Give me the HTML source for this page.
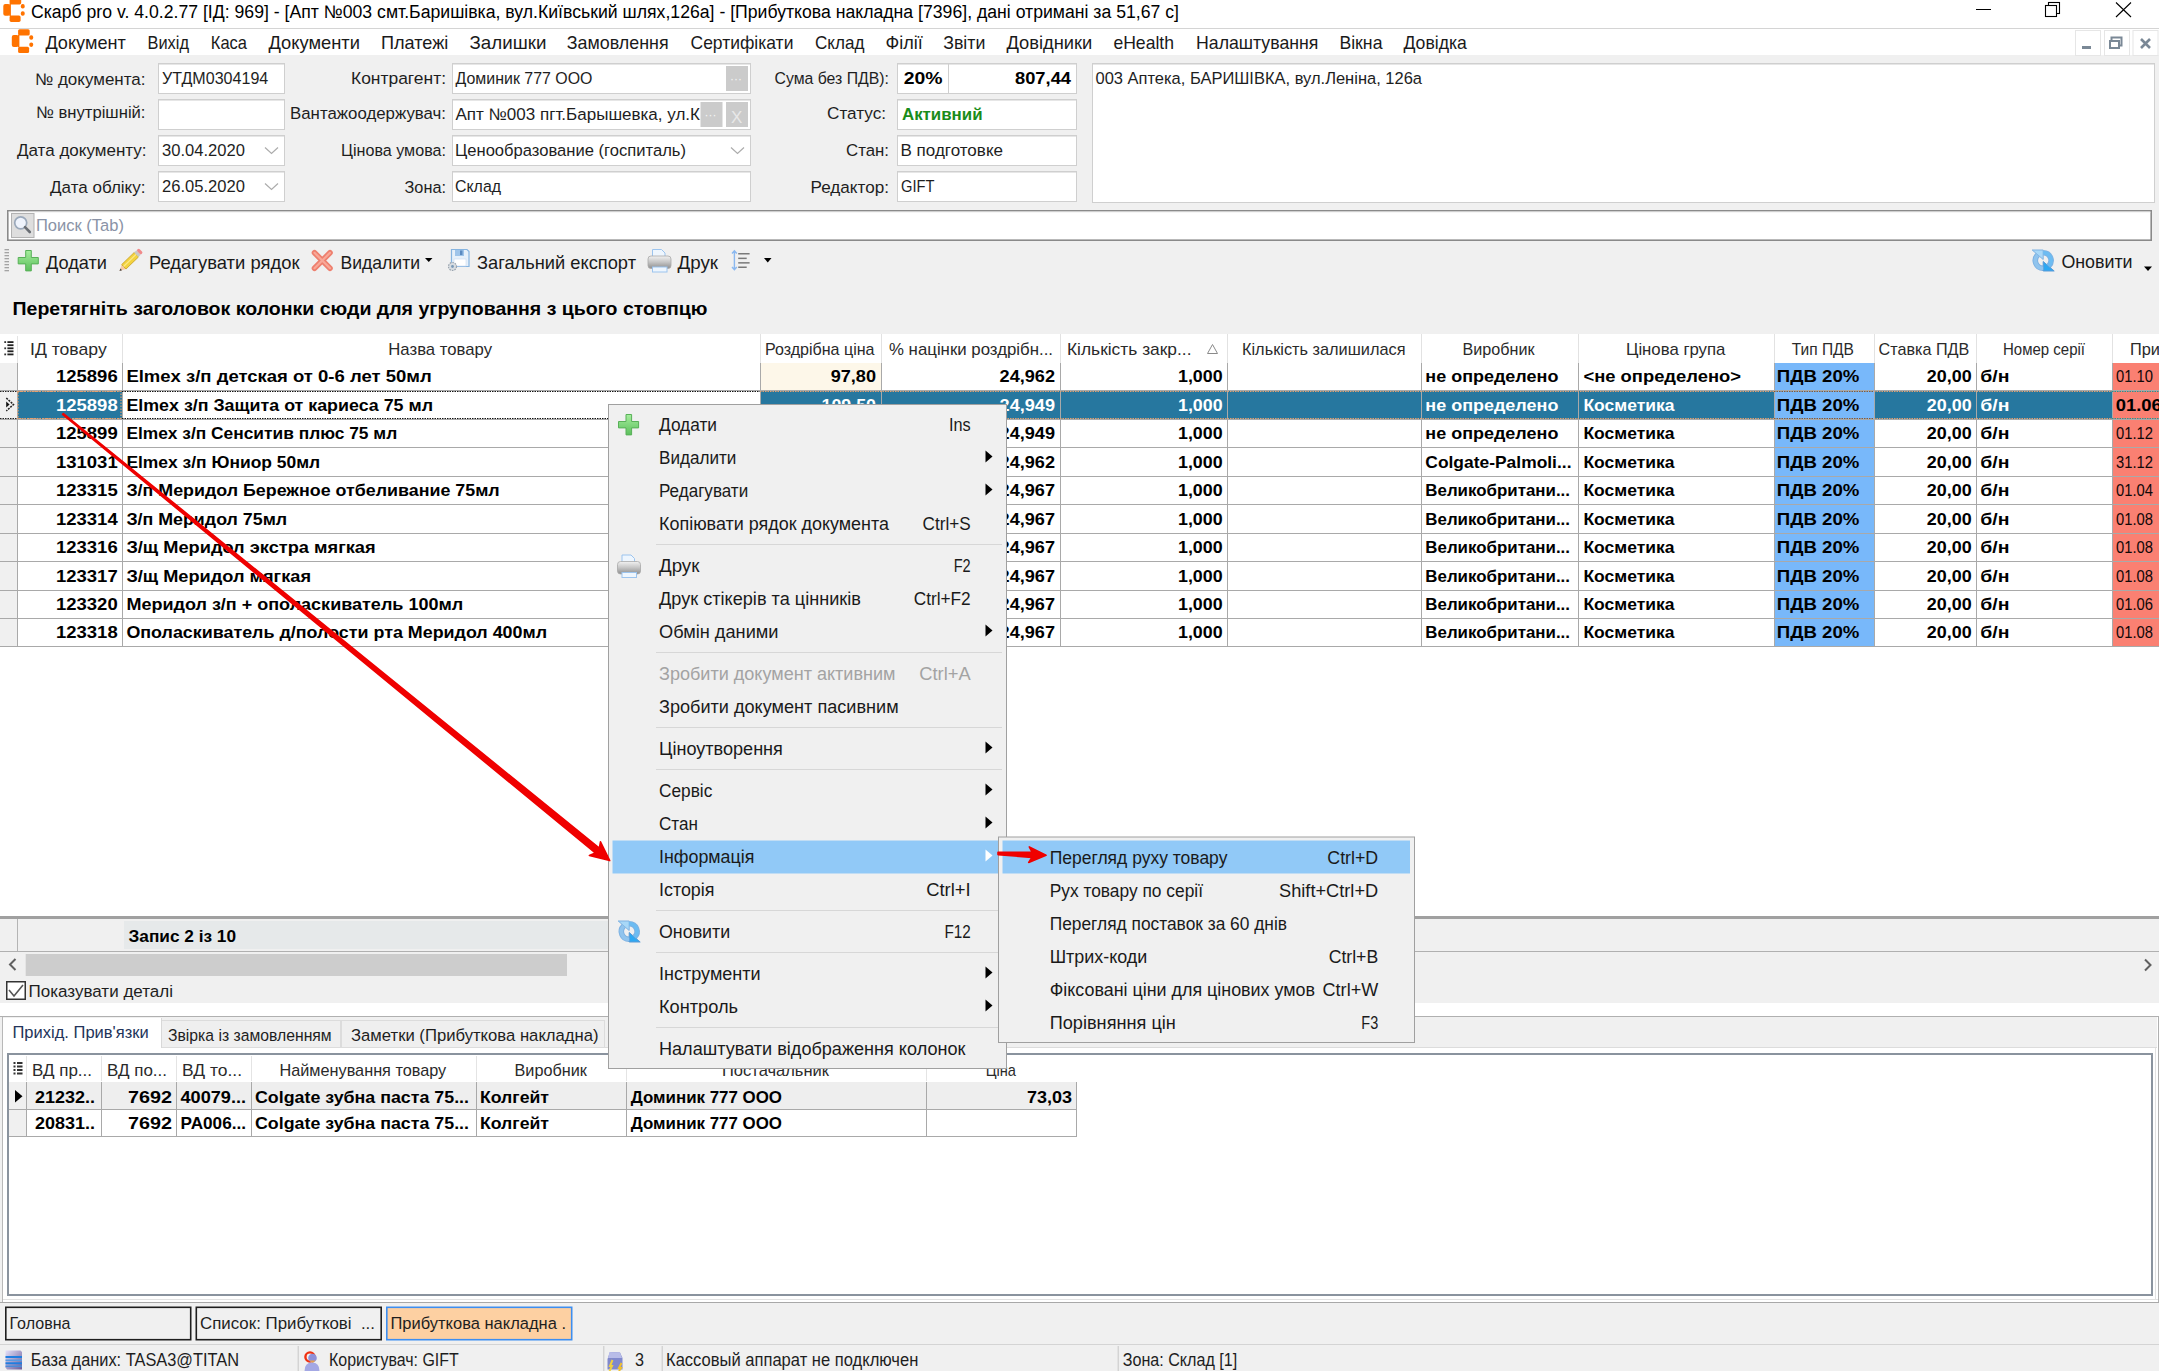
<!DOCTYPE html>
<html><head><meta charset="utf-8"><title>Скарб pro</title>
<style>
html,body{margin:0;padding:0;background:#f0f0f0;overflow:hidden;}
svg{display:block;font-family:"Liberation Sans",sans-serif;}
text{white-space:pre;}
</style></head>
<body>
<svg width="2159" height="1371" viewBox="0 0 2159 1371">
<defs><linearGradient id="pg" x1="0" y1="0" x2="0" y2="1"><stop offset="0" stop-color="#a6ee9e"/><stop offset="1" stop-color="#5cbf5c"/></linearGradient><linearGradient id="prg" x1="0" y1="0" x2="0" y2="1"><stop offset="0" stop-color="#f2f2f2"/><stop offset="0.5" stop-color="#c4c4c4"/><stop offset="1" stop-color="#8e8e8e"/></linearGradient></defs>
<rect x="0" y="0" width="2159" height="1371" fill="#f0f0f0" />
<rect x="0" y="0" width="2159" height="28" fill="#ffffff" />
<rect x="0" y="28" width="2159" height="1" fill="#d4d4d4" />
<g transform="translate(0,0)" fill="#ff7300"><rect x="9.6" y="-2" width="11.6" height="6.4" rx="1.6"/><rect x="3.3" y="3.9" width="6.8" height="11.8" rx="2"/><rect x="9.6" y="15.5" width="11" height="6.4" rx="1.6"/><rect x="9.4" y="3.6" width="1.5" height="12.4"/><rect x="20.8" y="4.1" width="3.9" height="4.5" rx="1.8"/><rect x="20.8" y="11.2" width="3.9" height="4.5" rx="1.8"/></g>
<text x="31" y="17.6" font-size="18" fill="#000" textLength="1148.0" lengthAdjust="spacingAndGlyphs" >Скарб pro v. 4.0.2.77 [ІД: 969] - [Апт №003 смт.Баришівка, вул.Київський шлях,126а] - [Прибуткова накладна [7396], дані отримані за 51,67 с]</text>
<rect x="1976" y="9" width="15" height="1" fill="#000" />
<rect x="2048.5" y="2.5" width="11" height="11" fill="none" stroke="#000" stroke-width="1.1" />
<rect x="2045.5" y="5.5" width="11" height="11" fill="#ffffff" stroke="#000" stroke-width="1.1" />
<path d="M2116 2.5 L2131 17 M2131 2.5 L2116 17" fill="none" stroke="#000" stroke-width="1.1" />
<rect x="0" y="29" width="2159" height="26" fill="#ffffff" />
<g transform="translate(8.5,31.2)" fill="#ff7300"><rect x="9.6" y="-2" width="11.6" height="6.4" rx="1.6"/><rect x="3.3" y="3.9" width="6.8" height="11.8" rx="2"/><rect x="9.6" y="15.5" width="11" height="6.4" rx="1.6"/><rect x="9.4" y="3.6" width="1.5" height="12.4"/><rect x="20.8" y="4.1" width="3.9" height="4.5" rx="1.8"/><rect x="20.8" y="11.2" width="3.9" height="4.5" rx="1.8"/></g>
<text x="45.4" y="49" font-size="18.5" fill="#1a1a1a" textLength="80.4" lengthAdjust="spacingAndGlyphs" >Документ</text>
<text x="147.5" y="49" font-size="18.5" fill="#1a1a1a" textLength="41.5" lengthAdjust="spacingAndGlyphs" >Вихід</text>
<text x="210.8" y="49" font-size="18.5" fill="#1a1a1a" textLength="36.2" lengthAdjust="spacingAndGlyphs" >Каса</text>
<text x="268.5" y="49" font-size="18.5" fill="#1a1a1a" textLength="91.5" lengthAdjust="spacingAndGlyphs" >Документи</text>
<text x="381" y="49" font-size="18.5" fill="#1a1a1a" textLength="67.4" lengthAdjust="spacingAndGlyphs" >Платежі</text>
<text x="469.5" y="49" font-size="18.5" fill="#1a1a1a" textLength="76.9" lengthAdjust="spacingAndGlyphs" >Залишки</text>
<text x="566.8" y="49" font-size="18.5" fill="#1a1a1a" textLength="101.8" lengthAdjust="spacingAndGlyphs" >Замовлення</text>
<text x="690.5" y="49" font-size="18.5" fill="#1a1a1a" textLength="102.9" lengthAdjust="spacingAndGlyphs" >Сертифікати</text>
<text x="815" y="49" font-size="18.5" fill="#1a1a1a" textLength="49.4" lengthAdjust="spacingAndGlyphs" >Склад</text>
<text x="885.5" y="49" font-size="18.5" fill="#1a1a1a" textLength="37.3" lengthAdjust="spacingAndGlyphs" >Філії</text>
<text x="943.2" y="49" font-size="18.5" fill="#1a1a1a" textLength="42.1" lengthAdjust="spacingAndGlyphs" >Звіти</text>
<text x="1006.4" y="49" font-size="18.5" fill="#1a1a1a" textLength="85.9" lengthAdjust="spacingAndGlyphs" >Довідники</text>
<text x="1113.4" y="49" font-size="18.5" fill="#1a1a1a" textLength="60.6" lengthAdjust="spacingAndGlyphs" >eHealth</text>
<text x="1196" y="49" font-size="18.5" fill="#1a1a1a" textLength="122.4" lengthAdjust="spacingAndGlyphs" >Налаштування</text>
<text x="1339.4" y="49" font-size="18.5" fill="#1a1a1a" textLength="43.1" lengthAdjust="spacingAndGlyphs" >Вікна</text>
<text x="1403.5" y="49" font-size="18.5" fill="#1a1a1a" textLength="63.3" lengthAdjust="spacingAndGlyphs" >Довідка</text>
<rect x="2075.5" y="30.5" width="25" height="25" fill="#ffffff" stroke="#e6e6e6" stroke-width="1" />
<rect x="2104.5" y="30.5" width="25" height="25" fill="#ffffff" stroke="#e6e6e6" stroke-width="1" />
<rect x="2133.0" y="30.5" width="25" height="25" fill="#ffffff" stroke="#e6e6e6" stroke-width="1" />
<rect x="2082" y="46" width="9" height="3" fill="#7a8896" />
<rect x="2111.5" y="37.5" width="10" height="8" fill="none" stroke="#7a8896" stroke-width="2" />
<rect x="2110" y="41" width="9" height="7" fill="#ffffff" stroke="#7a8896" stroke-width="2" />
<path d="M2141 39 L2150 48 M2150 39 L2141 48" fill="none" stroke="#7a8896" stroke-width="2.6" />
<rect x="158" y="63" width="127" height="31" fill="#cfcfcf" />
<rect x="159" y="64" width="125" height="29" fill="#ffffff" />
<rect x="159" y="64" width="125" height="1" fill="#e6e6e6" />
<rect x="158" y="99" width="127" height="31" fill="#cfcfcf" />
<rect x="159" y="100" width="125" height="29" fill="#ffffff" />
<rect x="159" y="100" width="125" height="1" fill="#e6e6e6" />
<rect x="158" y="135" width="127" height="31" fill="#cfcfcf" />
<rect x="159" y="136" width="125" height="29" fill="#ffffff" />
<rect x="159" y="136" width="125" height="1" fill="#e6e6e6" />
<rect x="158" y="171" width="127" height="31" fill="#cfcfcf" />
<rect x="159" y="172" width="125" height="29" fill="#ffffff" />
<rect x="159" y="172" width="125" height="1" fill="#e6e6e6" />
<rect x="452" y="63" width="299" height="31" fill="#cfcfcf" />
<rect x="453" y="64" width="297" height="29" fill="#ffffff" />
<rect x="453" y="64" width="297" height="1" fill="#e6e6e6" />
<rect x="452" y="99" width="299" height="31" fill="#cfcfcf" />
<rect x="453" y="100" width="297" height="29" fill="#ffffff" />
<rect x="453" y="100" width="297" height="1" fill="#e6e6e6" />
<rect x="452" y="135" width="299" height="31" fill="#cfcfcf" />
<rect x="453" y="136" width="297" height="29" fill="#ffffff" />
<rect x="453" y="136" width="297" height="1" fill="#e6e6e6" />
<rect x="452" y="171" width="299" height="31" fill="#cfcfcf" />
<rect x="453" y="172" width="297" height="29" fill="#ffffff" />
<rect x="453" y="172" width="297" height="1" fill="#e6e6e6" />
<rect x="897" y="63" width="180" height="31" fill="#cfcfcf" />
<rect x="898" y="64" width="178" height="29" fill="#ffffff" />
<rect x="898" y="64" width="178" height="1" fill="#e6e6e6" />
<rect x="948" y="64" width="1" height="29" fill="#cfcfcf" />
<rect x="897" y="99" width="180" height="31" fill="#cfcfcf" />
<rect x="898" y="100" width="178" height="29" fill="#ffffff" />
<rect x="898" y="100" width="178" height="1" fill="#e6e6e6" />
<rect x="897" y="135" width="180" height="31" fill="#cfcfcf" />
<rect x="898" y="136" width="178" height="29" fill="#ffffff" />
<rect x="898" y="136" width="178" height="1" fill="#e6e6e6" />
<rect x="897" y="171" width="180" height="31" fill="#cfcfcf" />
<rect x="898" y="172" width="178" height="29" fill="#ffffff" />
<rect x="898" y="172" width="178" height="1" fill="#e6e6e6" />
<rect x="1092" y="63" width="1063" height="140" fill="#cfcfcf" />
<rect x="1093" y="64" width="1061" height="138" fill="#ffffff" />
<rect x="1093" y="64" width="1061" height="1" fill="#e6e6e6" />
<path d="M265 147.5 L271.5 153.5 L278 147.5" fill="none" stroke="#acacac" stroke-width="1.2" />
<path d="M265 183.5 L271.5 189.5 L278 183.5" fill="none" stroke="#acacac" stroke-width="1.2" />
<path d="M731 147.5 L737.5 153.5 L744 147.5" fill="none" stroke="#acacac" stroke-width="1.2" />
<rect x="726" y="66" width="22" height="25" fill="#cbcbcb" />
<text x="730" y="83" font-size="12" fill="#f4f4f4" >···</text>
<rect x="700.5" y="102" width="22.0" height="25" fill="#cbcbcb" />
<text x="704.5" y="119" font-size="12" fill="#f4f4f4" >···</text>
<rect x="726" y="102" width="22" height="25" fill="#cbcbcb" />
<text x="731" y="123" font-size="17" fill="#e8e8e8" font-weight="normal">X</text>
<text x="35" y="84.6" font-size="16.8" fill="#1e1e1e" textLength="110.5" lengthAdjust="spacingAndGlyphs" >№ документа:</text>
<text x="36" y="117.7" font-size="16.8" fill="#1e1e1e" textLength="109.5" lengthAdjust="spacingAndGlyphs" >№ внутрішній:</text>
<text x="17" y="156" font-size="16.8" fill="#1e1e1e" textLength="129.5" lengthAdjust="spacingAndGlyphs" >Дата документу:</text>
<text x="50" y="192.5" font-size="16.8" fill="#1e1e1e" textLength="95.5" lengthAdjust="spacingAndGlyphs" >Дата обліку:</text>
<text x="351" y="84" font-size="16.8" fill="#1e1e1e" textLength="95.0" lengthAdjust="spacingAndGlyphs" >Контрагент:</text>
<text x="290" y="119" font-size="16.8" fill="#1e1e1e" textLength="156.0" lengthAdjust="spacingAndGlyphs" >Вантажоодержувач:</text>
<text x="341" y="156" font-size="16.8" fill="#1e1e1e" textLength="105.0" lengthAdjust="spacingAndGlyphs" >Цінова умова:</text>
<text x="404.5" y="192.5" font-size="16.8" fill="#1e1e1e" textLength="41.5" lengthAdjust="spacingAndGlyphs" >Зона:</text>
<text x="774.5" y="84" font-size="16.8" fill="#1e1e1e" textLength="114.5" lengthAdjust="spacingAndGlyphs" >Сума без ПДВ):</text>
<text x="827" y="119" font-size="16.8" fill="#1e1e1e" textLength="59.0" lengthAdjust="spacingAndGlyphs" >Статус:</text>
<text x="846" y="156" font-size="16.8" fill="#1e1e1e" textLength="43.0" lengthAdjust="spacingAndGlyphs" >Стан:</text>
<text x="810.5" y="192.5" font-size="16.8" fill="#1e1e1e" textLength="78.5" lengthAdjust="spacingAndGlyphs" >Редактор:</text>
<text x="162" y="83.5" font-size="16.8" fill="#1e1e1e" textLength="106.3" lengthAdjust="spacingAndGlyphs" >УТДМ0304194</text>
<text x="162" y="155.5" font-size="16.8" fill="#1e1e1e" textLength="83.0" lengthAdjust="spacingAndGlyphs" >30.04.2020</text>
<text x="162" y="191.5" font-size="16.8" fill="#1e1e1e" textLength="83.0" lengthAdjust="spacingAndGlyphs" >26.05.2020</text>
<text x="455.5" y="83.5" font-size="16.8" fill="#1e1e1e" textLength="137.0" lengthAdjust="spacingAndGlyphs" >Доминик 777 ООО</text>
<text x="455.5" y="119.5" font-size="16.8" fill="#1e1e1e" textLength="244.5" lengthAdjust="spacingAndGlyphs" >Апт №003 пгт.Барышевка, ул.К</text>
<text x="455" y="155.5" font-size="16.8" fill="#1e1e1e" textLength="231.0" lengthAdjust="spacingAndGlyphs" >Ценообразование (госпиталь)</text>
<text x="455" y="191.5" font-size="16.8" fill="#1e1e1e" textLength="46.0" lengthAdjust="spacingAndGlyphs" >Склад</text>
<text x="903.7" y="83.5" font-size="16.8" fill="#000" font-weight="bold" textLength="38.8" lengthAdjust="spacingAndGlyphs" >20%</text>
<text x="1015" y="83.5" font-size="16.8" fill="#000" font-weight="bold" textLength="56.0" lengthAdjust="spacingAndGlyphs" >807,44</text>
<text x="902" y="119.5" font-size="16.8" fill="#1a8c1a" font-weight="bold" textLength="80.5" lengthAdjust="spacingAndGlyphs" >Активний</text>
<text x="900.5" y="155.5" font-size="16.8" fill="#1e1e1e" textLength="102.5" lengthAdjust="spacingAndGlyphs" >В подготовке</text>
<text x="901" y="191.5" font-size="16.8" fill="#1e1e1e" textLength="33.5" lengthAdjust="spacingAndGlyphs" >GIFT</text>
<text x="1095.5" y="83.5" font-size="16.8" fill="#1e1e1e" textLength="326.5" lengthAdjust="spacingAndGlyphs" >003 Аптека, БАРИШІВКА, вул.Леніна, 126а</text>
<rect x="7" y="210" width="2145" height="31" fill="#8a8a8a" />
<rect x="8.6" y="211.6" width="2141.8" height="27.8" fill="#ffffff" />
<rect x="8.6" y="211.6" width="2141.8" height="1" fill="#f0f0f0" />
<rect x="11" y="213" width="23.5" height="25" fill="#b2b2b2" />
<rect x="12" y="214" width="21.5" height="23" fill="#dedede" />
<circle cx="20.7" cy="222.8" r="6" fill="#eef3fc" stroke="#9aa8ba" stroke-width="1.7"/>
<path d="M25 227.2 L29.8 232" fill="none" stroke="#6a6e74" stroke-width="2.6" stroke-linecap="round"/>
<text x="36" y="231" font-size="16.8" fill="#8a93a6" textLength="88.0" lengthAdjust="spacingAndGlyphs" >Поиск (Tab)</text>
<rect x="4.5" y="249" width="4.5" height="1.3" fill="#a4a4a4" />
<rect x="4.5" y="252" width="4.5" height="1.3" fill="#a4a4a4" />
<rect x="4.5" y="255" width="4.5" height="1.3" fill="#a4a4a4" />
<rect x="4.5" y="258" width="4.5" height="1.3" fill="#a4a4a4" />
<rect x="4.5" y="261" width="4.5" height="1.3" fill="#a4a4a4" />
<rect x="4.5" y="264" width="4.5" height="1.3" fill="#a4a4a4" />
<rect x="4.5" y="267" width="4.5" height="1.3" fill="#a4a4a4" />
<rect x="4.5" y="270" width="4.5" height="1.3" fill="#a4a4a4" />
<g transform="translate(17.7,250) scale(1.0)"><path d="M8 0.5 h5.6 v7 h7 v6.4 h-7 v7 h-5.6 v-7 h-7.5 v-6.4 h7.5 z" fill="url(#pg)" stroke="#58b058" stroke-width="1" stroke-linejoin="round"/></g>
<text x="46" y="268.5" font-size="18.5" fill="#1a1a1a" textLength="61.0" lengthAdjust="spacingAndGlyphs" >Додати</text>
<g transform="translate(119.5,271) rotate(-44)"><path d="M0 0 L6 -3 L6 3 Z" fill="#f6c9a6"/><path d="M0 0 L2.4 -1.2 L2.4 1.2 Z" fill="#444"/><rect x="6" y="-3.1" width="17.5" height="6.2" fill="#f3d23e" stroke="#c9a22a" stroke-width="0.8"/><rect x="6" y="-1" width="17.5" height="1.2" fill="#fbe88a"/><rect x="23.5" y="-3.1" width="3" height="6.2" fill="#c8c8c8"/><rect x="26.5" y="-3.1" width="3.2" height="6.2" rx="1.5" fill="#f08a8a"/></g>
<text x="149" y="268.5" font-size="18.5" fill="#1a1a1a" textLength="150.5" lengthAdjust="spacingAndGlyphs" >Редагувати рядок</text>
<path d="M314.5 252.8 L330 268.2 M330 252.8 L314.5 268.2" fill="none" stroke="#ee7f6e" stroke-width="5.6" stroke-linecap="round"/>
<path d="M314.5 252.8 L330 268.2 M330 252.8 L314.5 268.2" fill="none" stroke="#f8a898" stroke-width="2.2" stroke-linecap="round"/>
<text x="340.5" y="268.5" font-size="18.5" fill="#1a1a1a" textLength="79.5" lengthAdjust="spacingAndGlyphs" >Видалити</text>
<path d="M425 258 L432.5 258 L428.75 262 Z" fill="#000" />
<g transform="translate(447,248)"><path d="M4.5 1.5 h15.5 l2 2 v15 h-17.5 z" fill="#e6f0fa" stroke="#86b4e0" stroke-width="1.2"/><rect x="8" y="2" width="9" height="6" fill="#9ec4ea"/><rect x="13" y="2.5" width="2.5" height="4.5" fill="#5a8ac0"/><rect x="7" y="11" width="12" height="7" fill="#ffffff" stroke="#c8daf0" stroke-width="0.6"/><circle cx="5.5" cy="18.5" r="4" fill="#d8dde2" stroke="#9aa4ae" stroke-width="1.2" stroke-dasharray="1.6 1"/><circle cx="5.5" cy="18.5" r="1.4" fill="#7a9ab8"/></g>
<text x="477" y="268.5" font-size="18.5" fill="#1a1a1a" textLength="159.0" lengthAdjust="spacingAndGlyphs" >Загальний експорт</text>
<g transform="translate(647.5,248.5)"><path d="M5 9 V1 h9 l3.5 3.5 V9" fill="#eef6fe" stroke="#9cc4ee" stroke-width="1"/><rect x="0.5" y="7.5" width="23" height="12.5" rx="3" fill="url(#prg)" stroke="#a8a8a8" stroke-width="0.8"/><rect x="5" y="18.5" width="14.5" height="5" fill="#eef6fe" stroke="#9cc4ee" stroke-width="1"/></g>
<text x="677.5" y="268.5" font-size="18.5" fill="#1a1a1a" textLength="40.5" lengthAdjust="spacingAndGlyphs" >Друк</text>
<path d="M734.4 251.5 L734.4 269 M732 253.5 L734.4 250.8 L736.8 253.5 M732 267 L734.4 269.7 L736.8 267" fill="none" stroke="#8ab8f0" stroke-width="1.4" />
<rect x="738.2" y="253" width="11.4" height="1.5" fill="#7a7a7a" />
<rect x="738.2" y="257.6" width="8.5" height="1.5" fill="#7a7a7a" />
<rect x="738.2" y="262.1" width="11.4" height="1.5" fill="#7a7a7a" />
<rect x="738.2" y="266.5" width="8.5" height="1.5" fill="#7a7a7a" />
<path d="M764 258 L771.5 258 L767.75 262.5 Z" fill="#000" />
<g transform="translate(2032.2,250) scale(1.0)"><path d="M5.5 5 A7.75 7.75 0 0 0 11 18.3" stroke="#7eb2e2" stroke-width="5.6" fill="none"/><path d="M11 2.7 A7.75 7.75 0 0 1 16.5 16" stroke="#7eb2e2" stroke-width="5.6" fill="none"/><path d="M0 0 L11 0 L11 9.5 Z" fill="#a8d8f8" stroke="#7eb2e2" stroke-width="1"/><path d="M22 21 L11 21 L11 11.5 Z" fill="#2ea8f2" stroke="#5a9ad6" stroke-width="1"/><path d="M5.5 5 A7.75 7.75 0 0 0 11 18.3" stroke="#90c4ee" stroke-width="3.6" fill="none"/><path d="M11 2.7 A7.75 7.75 0 0 1 16.5 16" stroke="#6cbcf2" stroke-width="3.6" fill="none"/></g>
<text x="2061.4" y="268.3" font-size="18.5" fill="#1a1a1a" textLength="71.2" lengthAdjust="spacingAndGlyphs" >Оновити</text>
<path d="M2144 266.5 L2152 266.5 L2148 271 Z" fill="#000" />
<text x="12.5" y="314.5" font-size="18.6" fill="#000" font-weight="bold" textLength="695.0" lengthAdjust="spacingAndGlyphs" >Перетягніть заголовок колонки сюди для угруповання з цього стовпцю</text>
<rect x="0" y="334" width="2159" height="582" fill="#ffffff" />
<rect x="122" y="334" width="1" height="29" fill="#e2e2e2" />
<rect x="760" y="334" width="1" height="29" fill="#e2e2e2" />
<rect x="881" y="334" width="1" height="29" fill="#e2e2e2" />
<rect x="1060" y="334" width="1" height="29" fill="#e2e2e2" />
<rect x="1227" y="334" width="1" height="29" fill="#e2e2e2" />
<rect x="1421" y="334" width="1" height="29" fill="#e2e2e2" />
<rect x="1578" y="334" width="1" height="29" fill="#e2e2e2" />
<rect x="1774" y="334" width="1" height="29" fill="#e2e2e2" />
<rect x="1874" y="334" width="1" height="29" fill="#e2e2e2" />
<rect x="1976" y="334" width="1" height="29" fill="#e2e2e2" />
<rect x="2112" y="334" width="1" height="29" fill="#e2e2e2" />
<rect x="4.3" y="341.2" width="1.8" height="1.8" fill="#333" />
<rect x="7.4" y="341.2" width="6.1" height="1.8" fill="#222" />
<rect x="7.4" y="344.3" width="6.1" height="1.8" fill="#222" />
<rect x="4.3" y="347.4" width="1.8" height="1.8" fill="#333" />
<rect x="7.4" y="347.4" width="6.1" height="1.8" fill="#222" />
<rect x="7.4" y="350.4" width="6.1" height="1.8" fill="#222" />
<rect x="4.3" y="353.5" width="1.8" height="1.8" fill="#333" />
<rect x="7.4" y="353.5" width="6.1" height="1.8" fill="#222" />
<rect x="17" y="336" width="1" height="27" fill="#e4e4e4" />
<text x="30" y="355" font-size="16.6" fill="#2a2a2a" textLength="76.7" lengthAdjust="spacingAndGlyphs" >ІД товару</text>
<text x="388.3" y="355" font-size="16.6" fill="#2a2a2a" textLength="103.7" lengthAdjust="spacingAndGlyphs" >Назва товару</text>
<text x="765" y="355" font-size="16.6" fill="#2a2a2a" textLength="109.5" lengthAdjust="spacingAndGlyphs" >Роздрібна ціна</text>
<text x="889" y="355" font-size="16.6" fill="#2a2a2a" textLength="164.0" lengthAdjust="spacingAndGlyphs" >% націнки роздрібн...</text>
<text x="1067" y="355" font-size="16.6" fill="#2a2a2a" textLength="124.5" lengthAdjust="spacingAndGlyphs" >Кількість закр...</text>
<text x="1242" y="355" font-size="16.6" fill="#2a2a2a" textLength="163.5" lengthAdjust="spacingAndGlyphs" >Кількість залишилася</text>
<text x="1462.5" y="355" font-size="16.6" fill="#2a2a2a" textLength="72.0" lengthAdjust="spacingAndGlyphs" >Виробник</text>
<text x="1626" y="355" font-size="16.6" fill="#2a2a2a" textLength="99.4" lengthAdjust="spacingAndGlyphs" >Цінова група</text>
<text x="1791.7" y="355" font-size="16.6" fill="#2a2a2a" textLength="62.3" lengthAdjust="spacingAndGlyphs" >Тип ПДВ</text>
<text x="1878.5" y="355" font-size="16.6" fill="#2a2a2a" textLength="90.8" lengthAdjust="spacingAndGlyphs" >Ставка ПДВ</text>
<text x="2003" y="355" font-size="16.6" fill="#2a2a2a" textLength="82.0" lengthAdjust="spacingAndGlyphs" >Номер серії</text>
<text x="2130" y="355" font-size="16.6" fill="#2a2a2a" textLength="30.0" lengthAdjust="spacingAndGlyphs" >При</text>
<path d="M1207.5 353.5 L1212.5 344.5 L1217.5 353.5 Z" fill="none" stroke="#8a8a8a" stroke-width="1" />
<rect x="0" y="363" width="17" height="283" fill="#f0f0f0" />
<rect x="760" y="363" width="121" height="27" fill="#fdf7e9" />
<rect x="1774" y="363" width="100" height="27" fill="#78b8fa" />
<rect x="2112" y="363" width="47" height="27" fill="#fa8072" />
<text x="56" y="381.6" font-size="16.2" fill="#000000" font-weight="bold" textLength="61.7" lengthAdjust="spacingAndGlyphs" >125896</text>
<text x="126.4" y="381.6" font-size="16.2" fill="#000" font-weight="bold" textLength="305.3" lengthAdjust="spacingAndGlyphs" >Elmex з/п детская от 0-6 лет 50мл</text>
<text x="830.7" y="381.6" font-size="16.2" fill="#000000" font-weight="bold" textLength="45.3" lengthAdjust="spacingAndGlyphs" >97,80</text>
<text x="999.6" y="381.6" font-size="16.2" fill="#000000" font-weight="bold" textLength="55.4" lengthAdjust="spacingAndGlyphs" >24,962</text>
<text x="1178" y="381.6" font-size="16.2" fill="#000000" font-weight="bold" textLength="44.6" lengthAdjust="spacingAndGlyphs" >1,000</text>
<text x="1425.3" y="381.6" font-size="16.2" fill="#000000" font-weight="bold" textLength="133.1" lengthAdjust="spacingAndGlyphs" >не определено</text>
<text x="1583.4" y="381.6" font-size="16.2" fill="#000000" font-weight="bold" textLength="157.6" lengthAdjust="spacingAndGlyphs" >&lt;не определено&gt;</text>
<text x="1776.8" y="381.6" font-size="16.2" fill="#000" font-weight="bold" textLength="82.6" lengthAdjust="spacingAndGlyphs" >ПДВ 20%</text>
<text x="1926.8" y="381.6" font-size="16.2" fill="#000000" font-weight="bold" textLength="44.8" lengthAdjust="spacingAndGlyphs" >20,00</text>
<text x="1980.3" y="381.6" font-size="16.2" fill="#000000" font-weight="bold" textLength="29.2" lengthAdjust="spacingAndGlyphs" >б/н</text>
<text x="2116" y="381.6" font-size="16.2" fill="#100808" textLength="37.0" lengthAdjust="spacingAndGlyphs" >01.10</text>
<rect x="0" y="390" width="2159" height="1" fill="#a9a9a9" />
<rect x="17" y="391" width="105" height="28" fill="#26779f" />
<rect x="760" y="391" width="1014" height="28" fill="#26779f" />
<rect x="1874" y="391" width="238" height="28" fill="#26779f" />
<rect x="1774" y="391" width="100" height="28" fill="#78b8fa" />
<rect x="2112" y="391" width="47" height="28" fill="#fa8072" />
<text x="56" y="410.6" font-size="16.2" fill="#ffffff" font-weight="bold" textLength="61.7" lengthAdjust="spacingAndGlyphs" >125898</text>
<text x="126.4" y="410.6" font-size="16.2" fill="#000" font-weight="bold" textLength="306.6" lengthAdjust="spacingAndGlyphs" >Elmex з/п Защита от кариеса 75 мл</text>
<text x="821.5" y="410.6" font-size="16.2" fill="#ffffff" font-weight="bold" textLength="54.5" lengthAdjust="spacingAndGlyphs" >109,50</text>
<text x="999.6" y="410.6" font-size="16.2" fill="#ffffff" font-weight="bold" textLength="55.4" lengthAdjust="spacingAndGlyphs" >24,949</text>
<text x="1178" y="410.6" font-size="16.2" fill="#ffffff" font-weight="bold" textLength="44.6" lengthAdjust="spacingAndGlyphs" >1,000</text>
<text x="1425.3" y="410.6" font-size="16.2" fill="#ffffff" font-weight="bold" textLength="133.1" lengthAdjust="spacingAndGlyphs" >не определено</text>
<text x="1583.4" y="410.6" font-size="16.2" fill="#ffffff" font-weight="bold" textLength="91.1" lengthAdjust="spacingAndGlyphs" >Косметика</text>
<text x="1776.8" y="410.6" font-size="16.2" fill="#000" font-weight="bold" textLength="82.6" lengthAdjust="spacingAndGlyphs" >ПДВ 20%</text>
<text x="1926.8" y="410.6" font-size="16.2" fill="#ffffff" font-weight="bold" textLength="44.8" lengthAdjust="spacingAndGlyphs" >20,00</text>
<text x="1980.3" y="410.6" font-size="16.2" fill="#ffffff" font-weight="bold" textLength="29.2" lengthAdjust="spacingAndGlyphs" >б/н</text>
<text x="2115.8" y="410.6" font-size="16.2" fill="#000" font-weight="bold" textLength="46.0" lengthAdjust="spacingAndGlyphs" >01.06</text>
<rect x="0" y="419" width="2159" height="1" fill="#a9a9a9" />
<rect x="1774" y="420" width="100" height="27" fill="#78b8fa" />
<rect x="2112" y="420" width="47" height="27" fill="#fa8072" />
<text x="56" y="438.6" font-size="16.2" fill="#000000" font-weight="bold" textLength="61.7" lengthAdjust="spacingAndGlyphs" >125899</text>
<text x="126.4" y="438.6" font-size="16.2" fill="#000" font-weight="bold" textLength="270.8" lengthAdjust="spacingAndGlyphs" >Elmex з/п Сенситив плюс 75 мл</text>
<text x="999.6" y="438.6" font-size="16.2" fill="#000000" font-weight="bold" textLength="55.4" lengthAdjust="spacingAndGlyphs" >24,949</text>
<text x="1178" y="438.6" font-size="16.2" fill="#000000" font-weight="bold" textLength="44.6" lengthAdjust="spacingAndGlyphs" >1,000</text>
<text x="1425.3" y="438.6" font-size="16.2" fill="#000000" font-weight="bold" textLength="133.1" lengthAdjust="spacingAndGlyphs" >не определено</text>
<text x="1583.4" y="438.6" font-size="16.2" fill="#000000" font-weight="bold" textLength="91.1" lengthAdjust="spacingAndGlyphs" >Косметика</text>
<text x="1776.8" y="438.6" font-size="16.2" fill="#000" font-weight="bold" textLength="82.6" lengthAdjust="spacingAndGlyphs" >ПДВ 20%</text>
<text x="1926.8" y="438.6" font-size="16.2" fill="#000000" font-weight="bold" textLength="44.8" lengthAdjust="spacingAndGlyphs" >20,00</text>
<text x="1980.3" y="438.6" font-size="16.2" fill="#000000" font-weight="bold" textLength="29.2" lengthAdjust="spacingAndGlyphs" >б/н</text>
<text x="2116" y="438.6" font-size="16.2" fill="#100808" textLength="37.0" lengthAdjust="spacingAndGlyphs" >01.12</text>
<rect x="0" y="447" width="2159" height="1" fill="#a9a9a9" />
<rect x="1774" y="448" width="100" height="28" fill="#78b8fa" />
<rect x="2112" y="448" width="47" height="28" fill="#fa8072" />
<text x="56" y="467.6" font-size="16.2" fill="#000000" font-weight="bold" textLength="61.7" lengthAdjust="spacingAndGlyphs" >131031</text>
<text x="126.4" y="467.6" font-size="16.2" fill="#000" font-weight="bold" textLength="193.8" lengthAdjust="spacingAndGlyphs" >Elmex з/п Юниор 50мл</text>
<text x="999.6" y="467.6" font-size="16.2" fill="#000000" font-weight="bold" textLength="55.4" lengthAdjust="spacingAndGlyphs" >24,962</text>
<text x="1178" y="467.6" font-size="16.2" fill="#000000" font-weight="bold" textLength="44.6" lengthAdjust="spacingAndGlyphs" >1,000</text>
<text x="1425.3" y="467.6" font-size="16.2" fill="#000000" font-weight="bold" textLength="146.2" lengthAdjust="spacingAndGlyphs" >Colgate-Palmoli...</text>
<text x="1583.4" y="467.6" font-size="16.2" fill="#000000" font-weight="bold" textLength="91.1" lengthAdjust="spacingAndGlyphs" >Косметика</text>
<text x="1776.8" y="467.6" font-size="16.2" fill="#000" font-weight="bold" textLength="82.6" lengthAdjust="spacingAndGlyphs" >ПДВ 20%</text>
<text x="1926.8" y="467.6" font-size="16.2" fill="#000000" font-weight="bold" textLength="44.8" lengthAdjust="spacingAndGlyphs" >20,00</text>
<text x="1980.3" y="467.6" font-size="16.2" fill="#000000" font-weight="bold" textLength="29.2" lengthAdjust="spacingAndGlyphs" >б/н</text>
<text x="2116" y="467.6" font-size="16.2" fill="#100808" textLength="37.0" lengthAdjust="spacingAndGlyphs" >31.12</text>
<rect x="0" y="476" width="2159" height="1" fill="#a9a9a9" />
<rect x="1774" y="477" width="100" height="27" fill="#78b8fa" />
<rect x="2112" y="477" width="47" height="27" fill="#fa8072" />
<text x="56" y="495.6" font-size="16.2" fill="#000000" font-weight="bold" textLength="61.7" lengthAdjust="spacingAndGlyphs" >123315</text>
<text x="126.4" y="495.6" font-size="16.2" fill="#000" font-weight="bold" textLength="373.3" lengthAdjust="spacingAndGlyphs" >З/п Меридол Бережное отбеливание 75мл</text>
<text x="999.6" y="495.6" font-size="16.2" fill="#000000" font-weight="bold" textLength="55.4" lengthAdjust="spacingAndGlyphs" >24,967</text>
<text x="1178" y="495.6" font-size="16.2" fill="#000000" font-weight="bold" textLength="44.6" lengthAdjust="spacingAndGlyphs" >1,000</text>
<text x="1425.3" y="495.6" font-size="16.2" fill="#000000" font-weight="bold" textLength="144.7" lengthAdjust="spacingAndGlyphs" >Великобритани...</text>
<text x="1583.4" y="495.6" font-size="16.2" fill="#000000" font-weight="bold" textLength="91.1" lengthAdjust="spacingAndGlyphs" >Косметика</text>
<text x="1776.8" y="495.6" font-size="16.2" fill="#000" font-weight="bold" textLength="82.6" lengthAdjust="spacingAndGlyphs" >ПДВ 20%</text>
<text x="1926.8" y="495.6" font-size="16.2" fill="#000000" font-weight="bold" textLength="44.8" lengthAdjust="spacingAndGlyphs" >20,00</text>
<text x="1980.3" y="495.6" font-size="16.2" fill="#000000" font-weight="bold" textLength="29.2" lengthAdjust="spacingAndGlyphs" >б/н</text>
<text x="2116" y="495.6" font-size="16.2" fill="#100808" textLength="37.0" lengthAdjust="spacingAndGlyphs" >01.04</text>
<rect x="0" y="504" width="2159" height="1" fill="#a9a9a9" />
<rect x="1774" y="505" width="100" height="28" fill="#78b8fa" />
<rect x="2112" y="505" width="47" height="28" fill="#fa8072" />
<text x="56" y="524.6" font-size="16.2" fill="#000000" font-weight="bold" textLength="61.7" lengthAdjust="spacingAndGlyphs" >123314</text>
<text x="126.4" y="524.6" font-size="16.2" fill="#000" font-weight="bold" textLength="160.8" lengthAdjust="spacingAndGlyphs" >З/п Меридол 75мл</text>
<text x="999.6" y="524.6" font-size="16.2" fill="#000000" font-weight="bold" textLength="55.4" lengthAdjust="spacingAndGlyphs" >24,967</text>
<text x="1178" y="524.6" font-size="16.2" fill="#000000" font-weight="bold" textLength="44.6" lengthAdjust="spacingAndGlyphs" >1,000</text>
<text x="1425.3" y="524.6" font-size="16.2" fill="#000000" font-weight="bold" textLength="144.7" lengthAdjust="spacingAndGlyphs" >Великобритани...</text>
<text x="1583.4" y="524.6" font-size="16.2" fill="#000000" font-weight="bold" textLength="91.1" lengthAdjust="spacingAndGlyphs" >Косметика</text>
<text x="1776.8" y="524.6" font-size="16.2" fill="#000" font-weight="bold" textLength="82.6" lengthAdjust="spacingAndGlyphs" >ПДВ 20%</text>
<text x="1926.8" y="524.6" font-size="16.2" fill="#000000" font-weight="bold" textLength="44.8" lengthAdjust="spacingAndGlyphs" >20,00</text>
<text x="1980.3" y="524.6" font-size="16.2" fill="#000000" font-weight="bold" textLength="29.2" lengthAdjust="spacingAndGlyphs" >б/н</text>
<text x="2116" y="524.6" font-size="16.2" fill="#100808" textLength="37.0" lengthAdjust="spacingAndGlyphs" >01.08</text>
<rect x="0" y="533" width="2159" height="1" fill="#a9a9a9" />
<rect x="1774" y="534" width="100" height="27" fill="#78b8fa" />
<rect x="2112" y="534" width="47" height="27" fill="#fa8072" />
<text x="56" y="552.6" font-size="16.2" fill="#000000" font-weight="bold" textLength="61.7" lengthAdjust="spacingAndGlyphs" >123316</text>
<text x="126.4" y="552.6" font-size="16.2" fill="#000" font-weight="bold" textLength="249.2" lengthAdjust="spacingAndGlyphs" >З/щ Меридол экстра мягкая</text>
<text x="999.6" y="552.6" font-size="16.2" fill="#000000" font-weight="bold" textLength="55.4" lengthAdjust="spacingAndGlyphs" >24,967</text>
<text x="1178" y="552.6" font-size="16.2" fill="#000000" font-weight="bold" textLength="44.6" lengthAdjust="spacingAndGlyphs" >1,000</text>
<text x="1425.3" y="552.6" font-size="16.2" fill="#000000" font-weight="bold" textLength="144.7" lengthAdjust="spacingAndGlyphs" >Великобритани...</text>
<text x="1583.4" y="552.6" font-size="16.2" fill="#000000" font-weight="bold" textLength="91.1" lengthAdjust="spacingAndGlyphs" >Косметика</text>
<text x="1776.8" y="552.6" font-size="16.2" fill="#000" font-weight="bold" textLength="82.6" lengthAdjust="spacingAndGlyphs" >ПДВ 20%</text>
<text x="1926.8" y="552.6" font-size="16.2" fill="#000000" font-weight="bold" textLength="44.8" lengthAdjust="spacingAndGlyphs" >20,00</text>
<text x="1980.3" y="552.6" font-size="16.2" fill="#000000" font-weight="bold" textLength="29.2" lengthAdjust="spacingAndGlyphs" >б/н</text>
<text x="2116" y="552.6" font-size="16.2" fill="#100808" textLength="37.0" lengthAdjust="spacingAndGlyphs" >01.08</text>
<rect x="0" y="561" width="2159" height="1" fill="#a9a9a9" />
<rect x="1774" y="562" width="100" height="28" fill="#78b8fa" />
<rect x="2112" y="562" width="47" height="28" fill="#fa8072" />
<text x="56" y="581.6" font-size="16.2" fill="#000000" font-weight="bold" textLength="61.7" lengthAdjust="spacingAndGlyphs" >123317</text>
<text x="126.4" y="581.6" font-size="16.2" fill="#000" font-weight="bold" textLength="184.6" lengthAdjust="spacingAndGlyphs" >З/щ Меридол мягкая</text>
<text x="999.6" y="581.6" font-size="16.2" fill="#000000" font-weight="bold" textLength="55.4" lengthAdjust="spacingAndGlyphs" >24,967</text>
<text x="1178" y="581.6" font-size="16.2" fill="#000000" font-weight="bold" textLength="44.6" lengthAdjust="spacingAndGlyphs" >1,000</text>
<text x="1425.3" y="581.6" font-size="16.2" fill="#000000" font-weight="bold" textLength="144.7" lengthAdjust="spacingAndGlyphs" >Великобритани...</text>
<text x="1583.4" y="581.6" font-size="16.2" fill="#000000" font-weight="bold" textLength="91.1" lengthAdjust="spacingAndGlyphs" >Косметика</text>
<text x="1776.8" y="581.6" font-size="16.2" fill="#000" font-weight="bold" textLength="82.6" lengthAdjust="spacingAndGlyphs" >ПДВ 20%</text>
<text x="1926.8" y="581.6" font-size="16.2" fill="#000000" font-weight="bold" textLength="44.8" lengthAdjust="spacingAndGlyphs" >20,00</text>
<text x="1980.3" y="581.6" font-size="16.2" fill="#000000" font-weight="bold" textLength="29.2" lengthAdjust="spacingAndGlyphs" >б/н</text>
<text x="2116" y="581.6" font-size="16.2" fill="#100808" textLength="37.0" lengthAdjust="spacingAndGlyphs" >01.08</text>
<rect x="0" y="590" width="2159" height="1" fill="#a9a9a9" />
<rect x="1774" y="591" width="100" height="27" fill="#78b8fa" />
<rect x="2112" y="591" width="47" height="27" fill="#fa8072" />
<text x="56" y="609.6" font-size="16.2" fill="#000000" font-weight="bold" textLength="61.7" lengthAdjust="spacingAndGlyphs" >123320</text>
<text x="126.4" y="609.6" font-size="16.2" fill="#000" font-weight="bold" textLength="336.8" lengthAdjust="spacingAndGlyphs" >Меридол з/п + ополаскиватель 100мл</text>
<text x="999.6" y="609.6" font-size="16.2" fill="#000000" font-weight="bold" textLength="55.4" lengthAdjust="spacingAndGlyphs" >24,967</text>
<text x="1178" y="609.6" font-size="16.2" fill="#000000" font-weight="bold" textLength="44.6" lengthAdjust="spacingAndGlyphs" >1,000</text>
<text x="1425.3" y="609.6" font-size="16.2" fill="#000000" font-weight="bold" textLength="144.7" lengthAdjust="spacingAndGlyphs" >Великобритани...</text>
<text x="1583.4" y="609.6" font-size="16.2" fill="#000000" font-weight="bold" textLength="91.1" lengthAdjust="spacingAndGlyphs" >Косметика</text>
<text x="1776.8" y="609.6" font-size="16.2" fill="#000" font-weight="bold" textLength="82.6" lengthAdjust="spacingAndGlyphs" >ПДВ 20%</text>
<text x="1926.8" y="609.6" font-size="16.2" fill="#000000" font-weight="bold" textLength="44.8" lengthAdjust="spacingAndGlyphs" >20,00</text>
<text x="1980.3" y="609.6" font-size="16.2" fill="#000000" font-weight="bold" textLength="29.2" lengthAdjust="spacingAndGlyphs" >б/н</text>
<text x="2116" y="609.6" font-size="16.2" fill="#100808" textLength="37.0" lengthAdjust="spacingAndGlyphs" >01.06</text>
<rect x="0" y="618" width="2159" height="1" fill="#a9a9a9" />
<rect x="1774" y="619" width="100" height="27" fill="#78b8fa" />
<rect x="2112" y="619" width="47" height="27" fill="#fa8072" />
<text x="56" y="637.6" font-size="16.2" fill="#000000" font-weight="bold" textLength="61.7" lengthAdjust="spacingAndGlyphs" >123318</text>
<text x="126.4" y="637.6" font-size="16.2" fill="#000" font-weight="bold" textLength="420.7" lengthAdjust="spacingAndGlyphs" >Ополаскиватель д/полости рта Меридол 400мл</text>
<text x="999.6" y="637.6" font-size="16.2" fill="#000000" font-weight="bold" textLength="55.4" lengthAdjust="spacingAndGlyphs" >24,967</text>
<text x="1178" y="637.6" font-size="16.2" fill="#000000" font-weight="bold" textLength="44.6" lengthAdjust="spacingAndGlyphs" >1,000</text>
<text x="1425.3" y="637.6" font-size="16.2" fill="#000000" font-weight="bold" textLength="144.7" lengthAdjust="spacingAndGlyphs" >Великобритани...</text>
<text x="1583.4" y="637.6" font-size="16.2" fill="#000000" font-weight="bold" textLength="91.1" lengthAdjust="spacingAndGlyphs" >Косметика</text>
<text x="1776.8" y="637.6" font-size="16.2" fill="#000" font-weight="bold" textLength="82.6" lengthAdjust="spacingAndGlyphs" >ПДВ 20%</text>
<text x="1926.8" y="637.6" font-size="16.2" fill="#000000" font-weight="bold" textLength="44.8" lengthAdjust="spacingAndGlyphs" >20,00</text>
<text x="1980.3" y="637.6" font-size="16.2" fill="#000000" font-weight="bold" textLength="29.2" lengthAdjust="spacingAndGlyphs" >б/н</text>
<text x="2116" y="637.6" font-size="16.2" fill="#100808" textLength="37.0" lengthAdjust="spacingAndGlyphs" >01.08</text>
<rect x="0" y="646" width="2159" height="1" fill="#a9a9a9" />
<rect x="17" y="363" width="1" height="283" fill="#a9a9a9" />
<rect x="122" y="363" width="1" height="283" fill="#a9a9a9" />
<rect x="760" y="363" width="1" height="283" fill="#a9a9a9" />
<rect x="881" y="363" width="1" height="283" fill="#a9a9a9" />
<rect x="1060" y="363" width="1" height="283" fill="#a9a9a9" />
<rect x="1227" y="363" width="1" height="283" fill="#a9a9a9" />
<rect x="1421" y="363" width="1" height="283" fill="#a9a9a9" />
<rect x="1578" y="363" width="1" height="283" fill="#a9a9a9" />
<rect x="1774" y="363" width="1" height="283" fill="#a9a9a9" />
<rect x="1874" y="363" width="1" height="283" fill="#a9a9a9" />
<rect x="1976" y="363" width="1" height="283" fill="#a9a9a9" />
<rect x="2112" y="363" width="1" height="283" fill="#a9a9a9" />
<line x1="0" y1="391.5" x2="17" y2="391.5" stroke="#222222" stroke-width="1" stroke-dasharray="1.5 1"/>
<line x1="0" y1="418.5" x2="17" y2="418.5" stroke="#222222" stroke-width="1" stroke-dasharray="1.5 1"/>
<line x1="17" y1="391.5" x2="122" y2="391.5" stroke="#e8a070" stroke-width="1" stroke-dasharray="1.5 1"/>
<line x1="17" y1="418.5" x2="122" y2="418.5" stroke="#e8a070" stroke-width="1" stroke-dasharray="1.5 1"/>
<line x1="122" y1="391.5" x2="760" y2="391.5" stroke="#111111" stroke-width="1" stroke-dasharray="1.5 1"/>
<line x1="122" y1="418.5" x2="760" y2="418.5" stroke="#111111" stroke-width="1" stroke-dasharray="1.5 1"/>
<line x1="760" y1="391.5" x2="1774" y2="391.5" stroke="#e0a070" stroke-width="1" stroke-dasharray="1.5 1"/>
<line x1="760" y1="418.5" x2="1774" y2="418.5" stroke="#e0a070" stroke-width="1" stroke-dasharray="1.5 1"/>
<line x1="1774" y1="391.5" x2="1874" y2="391.5" stroke="#8a5a30" stroke-width="1" stroke-dasharray="1.5 1"/>
<line x1="1774" y1="418.5" x2="1874" y2="418.5" stroke="#8a5a30" stroke-width="1" stroke-dasharray="1.5 1"/>
<line x1="1874" y1="391.5" x2="2112" y2="391.5" stroke="#e0a070" stroke-width="1" stroke-dasharray="1.5 1"/>
<line x1="1874" y1="418.5" x2="2112" y2="418.5" stroke="#e0a070" stroke-width="1" stroke-dasharray="1.5 1"/>
<line x1="2112" y1="391.5" x2="2159" y2="391.5" stroke="#209898" stroke-width="1" stroke-dasharray="1.5 1"/>
<line x1="2112" y1="418.5" x2="2159" y2="418.5" stroke="#209898" stroke-width="1" stroke-dasharray="1.5 1"/>
<rect x="18" y="391.5" width="103" height="27" fill="none" stroke="#e0a070" stroke-width="1.2" stroke-dasharray="1.5 1.5"/>
<path d="M6.3 398 L13.5 404.5 L6.3 411" fill="none" stroke="#222" stroke-width="1.5" stroke-dasharray="2 1"/>
<path d="M6.2 401.5 L9.6 404.5 L6.2 407.5 Z" fill="#111" />
<rect x="0" y="916" width="2159" height="3" fill="#a0a0a0" />
<rect x="0" y="919" width="2159" height="32" fill="#f0f0f0" />
<rect x="17" y="919" width="1" height="32" fill="#b4b4b4" />
<rect x="124" y="921" width="636" height="28" fill="#e6e9ea" />
<text x="128.5" y="941.7" font-size="16.2" fill="#000" font-weight="bold" textLength="107.5" lengthAdjust="spacingAndGlyphs" >Запис 2 із 10</text>
<rect x="0" y="951" width="2159" height="1" fill="#b0b0b0" />
<rect x="0" y="952" width="2159" height="24" fill="#f0f0f0" />
<path d="M15.5 959 L10 964.5 L15.5 970" fill="none" stroke="#606060" stroke-width="2" />
<rect x="25.7" y="954" width="541.3" height="22" fill="#cdcdcd" />
<path d="M2145 959.5 L2150.5 965 L2145 970.5" fill="none" stroke="#606060" stroke-width="2" />
<rect x="0" y="976" width="2159" height="27" fill="#f0f0f0" />
<rect x="6" y="981" width="20" height="19" fill="#333333" />
<rect x="7.5" y="982.5" width="17.0" height="16.0" fill="#ffffff" />
<path d="M9 990 L14 996 L23 985" fill="none" stroke="#555" stroke-width="1.6" />
<text x="28.5" y="997.3" font-size="16.8" fill="#1e1e1e" textLength="144.5" lengthAdjust="spacingAndGlyphs" >Показувати деталі</text>
<rect x="0" y="1003" width="2159" height="13" fill="#ffffff" />
<rect x="0" y="1016" width="2159" height="1" fill="#b0b0b0" />
<rect x="2" y="1017" width="2156" height="286" fill="#ffffff" />
<rect x="3" y="1017" width="2154" height="30" fill="#f0f0f0" />
<rect x="3" y="1047" width="2154" height="1" fill="#dcdcdc" />
<rect x="2" y="1017" width="1" height="286" fill="#b8b8b8" />
<rect x="2158" y="1017" width="1" height="286" fill="#b0b0b0" />
<rect x="2155" y="1048" width="1" height="252" fill="#e2e2e2" />
<rect x="3" y="1299" width="2155" height="1" fill="#e2e2e2" />
<rect x="0" y="1302" width="2159" height="1" fill="#a8a8a8" />
<rect x="161" y="1020" width="180" height="28" fill="#dcdcdc" />
<rect x="162" y="1021" width="178" height="26" fill="#efefef" />
<rect x="341" y="1020" width="264" height="28" fill="#dcdcdc" />
<rect x="342" y="1021" width="262" height="26" fill="#efefef" />
<text x="168" y="1040.7" font-size="16.8" fill="#1e1e1e" textLength="163.7" lengthAdjust="spacingAndGlyphs" >Звірка із замовленням</text>
<text x="351" y="1040.7" font-size="16.8" fill="#1e1e1e" textLength="247.6" lengthAdjust="spacingAndGlyphs" >Заметки (Прибуткова накладна)</text>
<rect x="3" y="1018" width="158" height="35" fill="#ffffff" />
<rect x="161" y="1018" width="1" height="30" fill="#d8d8d8" />
<text x="12.5" y="1037.6" font-size="16.8" fill="#23345a" textLength="136.2" lengthAdjust="spacingAndGlyphs" >Прихід. Прив&#x27;язки</text>
<rect x="7" y="1053" width="2146" height="243" fill="#8a939e" />
<rect x="9" y="1055" width="2142" height="239" fill="#ffffff" />
<rect x="9" y="1082" width="17" height="54" fill="#f0f0f0" />
<rect x="26" y="1082" width="1050" height="27" fill="#eeeeee" />
<rect x="26" y="1056" width="1" height="25" fill="#e4e4e4" />
<rect x="101" y="1056" width="1" height="25" fill="#e4e4e4" />
<rect x="176" y="1056" width="1" height="25" fill="#e4e4e4" />
<rect x="251" y="1056" width="1" height="25" fill="#e4e4e4" />
<rect x="476" y="1056" width="1" height="25" fill="#e4e4e4" />
<rect x="626" y="1056" width="1" height="25" fill="#e4e4e4" />
<rect x="926" y="1056" width="1" height="25" fill="#e4e4e4" />
<rect x="13.5" y="1062" width="2" height="2" fill="#333" />
<rect x="17" y="1062" width="5.5" height="2" fill="#333" />
<rect x="13.5" y="1065.5" width="2" height="2" fill="#333" />
<rect x="17" y="1065.5" width="5.5" height="2" fill="#333" />
<rect x="13.5" y="1069" width="2" height="2" fill="#333" />
<rect x="17" y="1069" width="5.5" height="2" fill="#333" />
<rect x="13.5" y="1072.5" width="2" height="2" fill="#333" />
<rect x="17" y="1072.5" width="5.5" height="2" fill="#333" />
<text x="32" y="1076" font-size="16.6" fill="#2a2a2a" textLength="60.0" lengthAdjust="spacingAndGlyphs" >ВД пр...</text>
<text x="107" y="1076" font-size="16.6" fill="#2a2a2a" textLength="60.0" lengthAdjust="spacingAndGlyphs" >ВД по...</text>
<text x="182" y="1076" font-size="16.6" fill="#2a2a2a" textLength="60.0" lengthAdjust="spacingAndGlyphs" >ВД то...</text>
<text x="279.5" y="1076" font-size="16.6" fill="#2a2a2a" textLength="166.7" lengthAdjust="spacingAndGlyphs" >Найменування товару</text>
<text x="514.5" y="1076" font-size="16.6" fill="#2a2a2a" textLength="72.4" lengthAdjust="spacingAndGlyphs" >Виробник</text>
<text x="722" y="1076" font-size="16.6" fill="#2a2a2a" textLength="107.0" lengthAdjust="spacingAndGlyphs" >Постачальник</text>
<text x="985.7" y="1076" font-size="16.6" fill="#2a2a2a" textLength="30.3" lengthAdjust="spacingAndGlyphs" >Ціна</text>
<text x="35" y="1102.5" font-size="16.2" fill="#000" font-weight="bold" textLength="60.0" lengthAdjust="spacingAndGlyphs" >21232..</text>
<text x="128" y="1102.5" font-size="16.2" fill="#000" font-weight="bold" textLength="44.0" lengthAdjust="spacingAndGlyphs" >7692</text>
<text x="180.5" y="1102.5" font-size="16.2" fill="#000" font-weight="bold" textLength="65.5" lengthAdjust="spacingAndGlyphs" >40079...</text>
<text x="255" y="1102.5" font-size="16.2" fill="#000" font-weight="bold" textLength="214.0" lengthAdjust="spacingAndGlyphs" >Colgate зубна паста 75...</text>
<text x="480" y="1102.5" font-size="16.2" fill="#000" font-weight="bold" textLength="69.0" lengthAdjust="spacingAndGlyphs" >Колгейт</text>
<text x="630.7" y="1102.5" font-size="16.2" fill="#000" font-weight="bold" textLength="151.3" lengthAdjust="spacingAndGlyphs" >Доминик 777 ООО</text>
<text x="35" y="1128.8" font-size="16.2" fill="#000" font-weight="bold" textLength="60.0" lengthAdjust="spacingAndGlyphs" >20831..</text>
<text x="128" y="1128.8" font-size="16.2" fill="#000" font-weight="bold" textLength="44.0" lengthAdjust="spacingAndGlyphs" >7692</text>
<text x="180.5" y="1128.8" font-size="16.2" fill="#000" font-weight="bold" textLength="65.5" lengthAdjust="spacingAndGlyphs" >PA006...</text>
<text x="255" y="1128.8" font-size="16.2" fill="#000" font-weight="bold" textLength="214.0" lengthAdjust="spacingAndGlyphs" >Colgate зубна паста 75...</text>
<text x="480" y="1128.8" font-size="16.2" fill="#000" font-weight="bold" textLength="69.0" lengthAdjust="spacingAndGlyphs" >Колгейт</text>
<text x="630.7" y="1128.8" font-size="16.2" fill="#000" font-weight="bold" textLength="151.3" lengthAdjust="spacingAndGlyphs" >Доминик 777 ООО</text>
<text x="1027" y="1102.5" font-size="16.2" fill="#000" font-weight="bold" textLength="45.0" lengthAdjust="spacingAndGlyphs" >73,03</text>
<rect x="9" y="1109" width="1068" height="1" fill="#a9a9a9" />
<rect x="9" y="1136" width="1068" height="1" fill="#a9a9a9" />
<rect x="26" y="1082" width="1" height="55" fill="#a9a9a9" />
<rect x="101" y="1082" width="1" height="55" fill="#a9a9a9" />
<rect x="176" y="1082" width="1" height="55" fill="#a9a9a9" />
<rect x="251" y="1082" width="1" height="55" fill="#a9a9a9" />
<rect x="476" y="1082" width="1" height="55" fill="#a9a9a9" />
<rect x="626" y="1082" width="1" height="55" fill="#a9a9a9" />
<rect x="926" y="1082" width="1" height="55" fill="#a9a9a9" />
<rect x="1076" y="1082" width="1" height="55" fill="#a9a9a9" />
<path d="M15 1090 L22.5 1096.3 L15 1102.5 Z" fill="#000" />
<rect x="0" y="1303" width="2159" height="41" fill="#f0f0f0" />
<rect x="5" y="1306.5" width="186.5" height="34.0" fill="#1e1e1e" />
<rect x="6.6" y="1308.1" width="183.3" height="30.8" fill="#f0f0f0" />
<text x="9.5" y="1329.3" font-size="16.8" fill="#1e1e1e" textLength="61.0" lengthAdjust="spacingAndGlyphs" >Головна</text>
<rect x="195.5" y="1306.5" width="186.5" height="34.0" fill="#1e1e1e" />
<rect x="197.1" y="1308.1" width="183.3" height="30.8" fill="#f0f0f0" />
<text x="200.0" y="1329.3" font-size="16.8" fill="#1e1e1e" textLength="175.0" lengthAdjust="spacingAndGlyphs" >Список: Прибуткові  ...</text>
<rect x="386" y="1306.5" width="186.5" height="34.0" fill="#3d8ef0" />
<rect x="387.6" y="1308.1" width="183.3" height="30.8" fill="#fdd0a2" />
<text x="390.5" y="1329.3" font-size="16.8" fill="#1e1e1e" textLength="175.5" lengthAdjust="spacingAndGlyphs" >Прибуткова накладна .</text>
<rect x="0" y="1344" width="2159" height="1" fill="#d4d4d4" />
<rect x="297.7" y="1346" width="1" height="25" fill="#c8c8c8" />
<rect x="603.3" y="1346" width="1" height="25" fill="#c8c8c8" />
<rect x="661.7" y="1346" width="1" height="25" fill="#c8c8c8" />
<rect x="1117.7" y="1346" width="1" height="25" fill="#c8c8c8" />
<g><defs><linearGradient id="dbg" x1="0" y1="0" x2="1" y2="1"><stop offset="0" stop-color="#e4e0f8"/><stop offset="1" stop-color="#6a5c9a"/></linearGradient></defs><path d="M5.5 1350.5 h15 l1.5 1.5 v17.5 h-15 l-1.5 -2 z" fill="url(#dbg)"/><rect x="5.5" y="1356" width="16.5" height="2" fill="#1f7ee0"/><rect x="5.5" y="1359.5" width="16.5" height="1.6" fill="#5a9ae0"/><rect x="5.5" y="1362.3" width="16.5" height="2" fill="#1f7ee0"/><rect x="5.5" y="1365.5" width="16.5" height="1.6" fill="#4a8ad8"/></g>
<text x="30.8" y="1366.3" font-size="18.3" fill="#1e1e1e" textLength="208.2" lengthAdjust="spacingAndGlyphs" >База даних: TASA3@TITAN</text>
<g><circle cx="310" cy="1357" r="4.6" fill="none" stroke="#f03010" stroke-width="2.4"/><circle cx="312.5" cy="1358" r="4.3" fill="#8e90d8"/><path d="M309.5 1360.5 L315.5 1360.5 L312.5 1363.5 Z" fill="#e8a050"/><path d="M304.5 1371 Q304.5 1362.5 312 1362.5 Q319.5 1362.5 319.5 1371 Z" fill="#a4a8e4"/></g>
<text x="329" y="1366.3" font-size="18.3" fill="#1e1e1e" textLength="129.8" lengthAdjust="spacingAndGlyphs" >Користувач: GIFT</text>
<g><path d="M607.5 1359 L610 1352 L620 1352.5 L622.5 1358 L622.5 1369.5 L607.5 1369.5 Z" fill="#8088cc"/><path d="M609.5 1352 L620 1352.5 L622 1358 L608 1358 Z" fill="#b8bce8"/><path d="M612.5 1360 L610 1366 L612 1366 L609.5 1371" stroke="#f0d040" stroke-width="2" fill="none"/><path d="M621.5 1363 L619 1368 L621 1368 L619 1371" stroke="#f0c030" stroke-width="2" fill="none"/></g>
<text x="635" y="1366.3" font-size="18.3" fill="#1e1e1e" textLength="9.0" lengthAdjust="spacingAndGlyphs" >3</text>
<text x="666" y="1366.3" font-size="18.3" fill="#1e1e1e" textLength="252.3" lengthAdjust="spacingAndGlyphs" >Кассовый аппарат не подключен</text>
<text x="1122.7" y="1366.3" font-size="18.3" fill="#1e1e1e" textLength="114.6" lengthAdjust="spacingAndGlyphs" >Зона: Склад [1]</text>
<rect x="608" y="404" width="399" height="665" fill="#a0a0a0" />
<rect x="609" y="405" width="397" height="663" fill="#f0f0f0" />
<text x="659" y="431" font-size="18.3" fill="#1a1a1a" textLength="58.0" lengthAdjust="spacingAndGlyphs" >Додати</text>
<text x="949" y="431" font-size="18.3" fill="#1a1a1a" textLength="21.7" lengthAdjust="spacingAndGlyphs" >Ins</text>
<text x="659" y="464" font-size="18.3" fill="#1a1a1a" textLength="77.4" lengthAdjust="spacingAndGlyphs" >Видалити</text>
<path d="M985.5 450.5 L992.5 456.5 L985.5 462.5 Z" fill="#000" />
<text x="659" y="497" font-size="18.3" fill="#1a1a1a" textLength="89.2" lengthAdjust="spacingAndGlyphs" >Редагувати</text>
<path d="M985.5 483.5 L992.5 489.5 L985.5 495.5 Z" fill="#000" />
<text x="659" y="530" font-size="18.3" fill="#1a1a1a" textLength="230.0" lengthAdjust="spacingAndGlyphs" >Копіювати рядок документа</text>
<text x="922.6" y="530" font-size="18.3" fill="#1a1a1a" textLength="48.1" lengthAdjust="spacingAndGlyphs" >Ctrl+S</text>
<rect x="656" y="544" width="346" height="1" fill="#d7d7d7" />
<text x="659" y="572" font-size="18.3" fill="#1a1a1a" textLength="40.3" lengthAdjust="spacingAndGlyphs" >Друк</text>
<text x="953.7" y="572" font-size="18.3" fill="#1a1a1a" textLength="17.0" lengthAdjust="spacingAndGlyphs" >F2</text>
<text x="659" y="605" font-size="18.3" fill="#1a1a1a" textLength="201.9" lengthAdjust="spacingAndGlyphs" >Друк стікерів та цінників</text>
<text x="913.7" y="605" font-size="18.3" fill="#1a1a1a" textLength="57.0" lengthAdjust="spacingAndGlyphs" >Ctrl+F2</text>
<text x="659" y="638" font-size="18.3" fill="#1a1a1a" textLength="119.5" lengthAdjust="spacingAndGlyphs" >Обмін даними</text>
<path d="M985.5 624.5 L992.5 630.5 L985.5 636.5 Z" fill="#000" />
<rect x="656" y="652" width="346" height="1" fill="#d7d7d7" />
<text x="659" y="680" font-size="18.3" fill="#a3a3a3" textLength="236.5" lengthAdjust="spacingAndGlyphs" >Зробити документ активним</text>
<text x="919.3" y="680" font-size="18.3" fill="#a3a3a3" textLength="51.4" lengthAdjust="spacingAndGlyphs" >Ctrl+A</text>
<text x="659" y="713" font-size="18.3" fill="#1a1a1a" textLength="239.6" lengthAdjust="spacingAndGlyphs" >Зробити документ пасивним</text>
<rect x="656" y="727" width="346" height="1" fill="#d7d7d7" />
<text x="659" y="755" font-size="18.3" fill="#1a1a1a" textLength="123.9" lengthAdjust="spacingAndGlyphs" >Ціноутворення</text>
<path d="M985.5 741.5 L992.5 747.5 L985.5 753.5 Z" fill="#000" />
<rect x="656" y="769" width="346" height="1" fill="#d7d7d7" />
<text x="659" y="797" font-size="18.3" fill="#1a1a1a" textLength="53.3" lengthAdjust="spacingAndGlyphs" >Сервіс</text>
<path d="M985.5 783.5 L992.5 789.5 L985.5 795.5 Z" fill="#000" />
<text x="659" y="830" font-size="18.3" fill="#1a1a1a" textLength="38.9" lengthAdjust="spacingAndGlyphs" >Стан</text>
<path d="M985.5 816.5 L992.5 822.5 L985.5 828.5 Z" fill="#000" />
<rect x="612.5" y="840.5" width="385.5" height="33" fill="#91c9f7" />
<text x="659" y="863" font-size="18.3" fill="#1a1a1a" textLength="95.3" lengthAdjust="spacingAndGlyphs" >Інформація</text>
<path d="M985.5 849.5 L992.5 855.5 L985.5 861.5 Z" fill="#ffffff" />
<text x="659" y="896" font-size="18.3" fill="#1a1a1a" textLength="55.5" lengthAdjust="spacingAndGlyphs" >Історія</text>
<text x="926.2" y="896" font-size="18.3" fill="#1a1a1a" textLength="44.5" lengthAdjust="spacingAndGlyphs" >Ctrl+I</text>
<rect x="656" y="910" width="346" height="1" fill="#d7d7d7" />
<text x="659" y="938" font-size="18.3" fill="#1a1a1a" textLength="71.2" lengthAdjust="spacingAndGlyphs" >Оновити</text>
<text x="944.4" y="938" font-size="18.3" fill="#1a1a1a" textLength="26.3" lengthAdjust="spacingAndGlyphs" >F12</text>
<rect x="656" y="952" width="346" height="1" fill="#d7d7d7" />
<text x="659" y="980" font-size="18.3" fill="#1a1a1a" textLength="101.6" lengthAdjust="spacingAndGlyphs" >Інструменти</text>
<path d="M985.5 966.5 L992.5 972.5 L985.5 978.5 Z" fill="#000" />
<text x="659" y="1013" font-size="18.3" fill="#1a1a1a" textLength="79.0" lengthAdjust="spacingAndGlyphs" >Контроль</text>
<path d="M985.5 999.5 L992.5 1005.5 L985.5 1011.5 Z" fill="#000" />
<rect x="656" y="1027" width="346" height="1" fill="#d7d7d7" />
<text x="659" y="1055" font-size="18.3" fill="#1a1a1a" textLength="306.4" lengthAdjust="spacingAndGlyphs" >Налаштувати відображення колонок</text>
<g transform="translate(618,414) scale(1.0)"><path d="M8 0.5 h5.6 v7 h7 v6.4 h-7 v7 h-5.6 v-7 h-7.5 v-6.4 h7.5 z" fill="url(#pg)" stroke="#58b058" stroke-width="1" stroke-linejoin="round"/></g>
<g transform="translate(617,554)"><path d="M5 9 V1 h9 l3.5 3.5 V9" fill="#eef6fe" stroke="#9cc4ee" stroke-width="1"/><rect x="0.5" y="7.5" width="23" height="12.5" rx="3" fill="url(#prg)" stroke="#a8a8a8" stroke-width="0.8"/><rect x="5" y="18.5" width="14.5" height="5" fill="#eef6fe" stroke="#9cc4ee" stroke-width="1"/></g>
<g transform="translate(618.2,921) scale(1.0)"><path d="M5.5 5 A7.75 7.75 0 0 0 11 18.3" stroke="#7eb2e2" stroke-width="5.6" fill="none"/><path d="M11 2.7 A7.75 7.75 0 0 1 16.5 16" stroke="#7eb2e2" stroke-width="5.6" fill="none"/><path d="M0 0 L11 0 L11 9.5 Z" fill="#a8d8f8" stroke="#7eb2e2" stroke-width="1"/><path d="M22 21 L11 21 L11 11.5 Z" fill="#2ea8f2" stroke="#5a9ad6" stroke-width="1"/><path d="M5.5 5 A7.75 7.75 0 0 0 11 18.3" stroke="#90c4ee" stroke-width="3.6" fill="none"/><path d="M11 2.7 A7.75 7.75 0 0 1 16.5 16" stroke="#6cbcf2" stroke-width="3.6" fill="none"/></g>
<rect x="998" y="836.5" width="417" height="206.5" fill="#a0a0a0" />
<rect x="999" y="837.5" width="415" height="204.5" fill="#f0f0f0" />
<rect x="1002.5" y="840.5" width="407.5" height="33" fill="#91c9f7" />
<text x="1049.7" y="863.5" font-size="18.3" fill="#1a1a1a" textLength="177.7" lengthAdjust="spacingAndGlyphs" >Перегляд руху товару</text>
<text x="1327.3" y="863.5" font-size="18.3" fill="#1a1a1a" textLength="50.9" lengthAdjust="spacingAndGlyphs" >Ctrl+D</text>
<text x="1049.7" y="896.5" font-size="18.3" fill="#1a1a1a" textLength="153.3" lengthAdjust="spacingAndGlyphs" >Рух товару по серії</text>
<text x="1279" y="896.5" font-size="18.3" fill="#1a1a1a" textLength="99.2" lengthAdjust="spacingAndGlyphs" >Shift+Ctrl+D</text>
<text x="1049.7" y="929.5" font-size="18.3" fill="#1a1a1a" textLength="237.3" lengthAdjust="spacingAndGlyphs" >Перегляд поставок за 60 днів</text>
<text x="1049.7" y="962.5" font-size="18.3" fill="#1a1a1a" textLength="97.6" lengthAdjust="spacingAndGlyphs" >Штрих-коди</text>
<text x="1328.7" y="962.5" font-size="18.3" fill="#1a1a1a" textLength="49.5" lengthAdjust="spacingAndGlyphs" >Ctrl+B</text>
<text x="1049.7" y="995.5" font-size="18.3" fill="#1a1a1a" textLength="265.3" lengthAdjust="spacingAndGlyphs" >Фіксовані ціни для цінових умов</text>
<text x="1322.6" y="995.5" font-size="18.3" fill="#1a1a1a" textLength="55.6" lengthAdjust="spacingAndGlyphs" >Ctrl+W</text>
<text x="1049.7" y="1028.5" font-size="18.3" fill="#1a1a1a" textLength="126.2" lengthAdjust="spacingAndGlyphs" >Порівняння цін</text>
<text x="1361.3" y="1028.5" font-size="18.3" fill="#1a1a1a" textLength="16.9" lengthAdjust="spacingAndGlyphs" >F3</text>
<path d="M62.6 414.5 L595.3 852.9 L589.4 855.4 L609.7 860.6 L600.5 841.8 L599.3 848.1 L63.4 413.5 Z" fill="#f00000" stroke="#ee0000" stroke-width="1.6" stroke-linejoin="round"/>
<path d="M998.0 854.6 L1031.9 857.4 L1028.7 862.4 L1046.0 855.3 L1029.3 846.9 L1032.1 852.2 L998.0 852.4 Z" fill="#f00000" stroke="#ee0000" stroke-width="1.6" stroke-linejoin="round"/>
</svg>
</body></html>
